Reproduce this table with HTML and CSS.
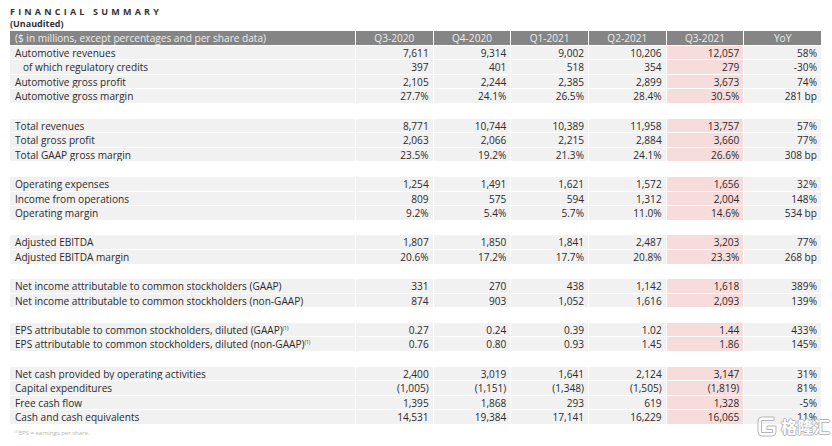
FILE: index.html
```html
<!DOCTYPE html>
<html>
<head>
<meta charset="utf-8">
<link rel="stylesheet" href="styles.css">
</head>
<body>
<div class="page">
  <div class="title">FINANCIAL SUMMARY</div>
  <div class="subtitle">(Unaudited)</div>
  <div class="table">
    <div class="row head"><div class="lbl">($ in millions, except percentages and per share data)</div><div>Q3-2020</div><div>Q4-2020</div><div>Q1-2021</div><div>Q2-2021</div><div class="hl">Q3-2021</div><div>YoY</div></div>

    <div class="row"><div class="lbl">Automotive revenues</div><div>7,611</div><div>9,314</div><div>9,002</div><div>10,206</div><div class="hl">12,057</div><div>58%</div></div>
    <div class="row"><div class="lbl ind">of which regulatory credits</div><div>397</div><div>401</div><div>518</div><div>354</div><div class="hl">279</div><div>-30%</div></div>
    <div class="row"><div class="lbl">Automotive gross profit</div><div>2,105</div><div>2,244</div><div>2,385</div><div>2,899</div><div class="hl">3,673</div><div>74%</div></div>
    <div class="row"><div class="lbl">Automotive gross margin</div><div>27.7%</div><div>24.1%</div><div>26.5%</div><div>28.4%</div><div class="hl">30.5%</div><div>281 bp</div></div>
    <div class="spacer"></div>

    <div class="row"><div class="lbl">Total revenues</div><div>8,771</div><div>10,744</div><div>10,389</div><div>11,958</div><div class="hl">13,757</div><div>57%</div></div>
    <div class="row"><div class="lbl">Total gross profit</div><div>2,063</div><div>2,066</div><div>2,215</div><div>2,884</div><div class="hl">3,660</div><div>77%</div></div>
    <div class="row"><div class="lbl">Total GAAP gross margin</div><div>23.5%</div><div>19.2%</div><div>21.3%</div><div>24.1%</div><div class="hl">26.6%</div><div>308 bp</div></div>
    <div class="spacer"></div>

    <div class="row"><div class="lbl">Operating expenses</div><div>1,254</div><div>1,491</div><div>1,621</div><div>1,572</div><div class="hl">1,656</div><div>32%</div></div>
    <div class="row"><div class="lbl">Income from operations</div><div>809</div><div>575</div><div>594</div><div>1,312</div><div class="hl">2,004</div><div>148%</div></div>
    <div class="row"><div class="lbl">Operating margin</div><div>9.2%</div><div>5.4%</div><div>5.7%</div><div>11.0%</div><div class="hl">14.6%</div><div>534 bp</div></div>
    <div class="spacer"></div>

    <div class="row"><div class="lbl">Adjusted EBITDA</div><div>1,807</div><div>1,850</div><div>1,841</div><div>2,487</div><div class="hl">3,203</div><div>77%</div></div>
    <div class="row"><div class="lbl">Adjusted EBITDA margin</div><div>20.6%</div><div>17.2%</div><div>17.7%</div><div>20.8%</div><div class="hl">23.3%</div><div>268 bp</div></div>
    <div class="spacer"></div>

    <div class="row"><div class="lbl">Net income attributable to common stockholders (GAAP)</div><div>331</div><div>270</div><div>438</div><div>1,142</div><div class="hl">1,618</div><div>389%</div></div>
    <div class="row"><div class="lbl">Net income attributable to common stockholders (non-GAAP)</div><div>874</div><div>903</div><div>1,052</div><div>1,616</div><div class="hl">2,093</div><div>139%</div></div>
    <div class="spacer"></div>

    <div class="row"><div class="lbl">EPS attributable to common stockholders, diluted (GAAP)<sup>(1)</sup></div><div>0.27</div><div>0.24</div><div>0.39</div><div>1.02</div><div class="hl">1.44</div><div>433%</div></div>
    <div class="row"><div class="lbl">EPS attributable to common stockholders, diluted (non-GAAP)<sup>(1)</sup></div><div>0.76</div><div>0.80</div><div>0.93</div><div>1.45</div><div class="hl">1.86</div><div>145%</div></div>
    <div class="spacer"></div>

    <div class="row"><div class="lbl">Net cash provided by operating activities</div><div>2,400</div><div>3,019</div><div>1,641</div><div>2,124</div><div class="hl">3,147</div><div>31%</div></div>
    <div class="row"><div class="lbl">Capital expenditures</div><div>(1,005)</div><div>(1,151)</div><div>(1,348)</div><div>(1,505)</div><div class="hl">(1,819)</div><div>81%</div></div>
    <div class="row"><div class="lbl">Free cash flow</div><div>1,395</div><div>1,868</div><div>293</div><div>619</div><div class="hl">1,328</div><div>-5%</div></div>
    <div class="row"><div class="lbl">Cash and cash equivalents</div><div>14,531</div><div>19,384</div><div>17,141</div><div>16,229</div><div class="hl">16,065</div><div>11%</div></div>
  </div>
  <div class="foot"><sup>(1)</sup>EPS = earnings per share.</div>

  <div class="watermark">
    <svg class="wm-icon" width="22" height="24" viewBox="0 0 22 24">
      <path d="M18 3 H6 Q2 3 2 7 V18 Q2 22 6 22 H16 Q20 22 20 18 V12 H11 V15.5 H16.5 V18.5 H5.5 V6.5 H18 Z" fill="#ffffff" stroke="#b4b4b4" stroke-width="1"/>
    </svg>
    <span class="wm-text">格隆汇</span>
  </div>
</div>
</body>
</html>
```

FILE: styles.css
```css
html, body {
  margin: 0;
  padding: 0;
  background: #ffffff;
}

.page {
  position: relative;
  width: 832px;
  height: 446px;
  padding: 6px 11px 0 10px;
  box-sizing: border-box;
  font-family: "Open Sans", "Noto Sans", sans-serif;
  color: #2b2b2b;
  overflow: hidden;
}

.title {
  font-size: 9px;
  font-weight: 700;
  letter-spacing: 3.2px;
  line-height: 12px;
  color: #333333;
}

.subtitle {
  font-size: 9px;
  font-weight: 700;
  line-height: 12px;
  color: #333333;
  margin-bottom: 1px;
}

.table {
  display: flex;
  flex-direction: column;
}

.row {
  display: grid;
  grid-template-columns: 345px repeat(6, 1fr);
  column-gap: 1px;
  height: 13.6px;
  margin-bottom: 1px;
  font-size: 10.1px;
  line-height: 15px;
}

.row > div {
  background: #f1f1f1;
  text-align: right;
  padding-right: 4px;
  white-space: nowrap;
  overflow: hidden;
}

.row > div.hl {
  background: #f7dcdc;
}

.row > .lbl {
  text-align: left;
  padding-left: 5px;
}

.row > .lbl.ind {
  padding-left: 13px;
}

.row.head > div {
  background: #858585;
  color: #ececec;
  text-align: center;
  padding-right: 0;
}

.row.head > .lbl {
  text-align: left;
}

.spacer {
  height: 13.6px;
  margin-bottom: 1px;
}

sup {
  font-size: 5px;
  line-height: 0;
  vertical-align: 4px;
}

.foot {
  font-size: 6px;
  color: #b5b5b5;
  padding-left: 4px;
  margin-top: 4px;
  line-height: 8px;
}

.foot sup {
  font-size: 4px;
  vertical-align: 2px;
}

.watermark {
  position: absolute;
  left: 756px;
  top: 414px;
  display: flex;
  align-items: center;
  gap: 3px;
}

.wm-text {
  font-family: "Noto Sans CJK SC", sans-serif;
  font-size: 16px;
  font-weight: 700;
  color: #ffffff;
  letter-spacing: 0.5px;
  text-shadow: -1px 0 #b4b4b4, 1px 0 #b4b4b4, 0 -1px #b4b4b4, 0 1px #b4b4b4;
  line-height: 24px;
}
```
